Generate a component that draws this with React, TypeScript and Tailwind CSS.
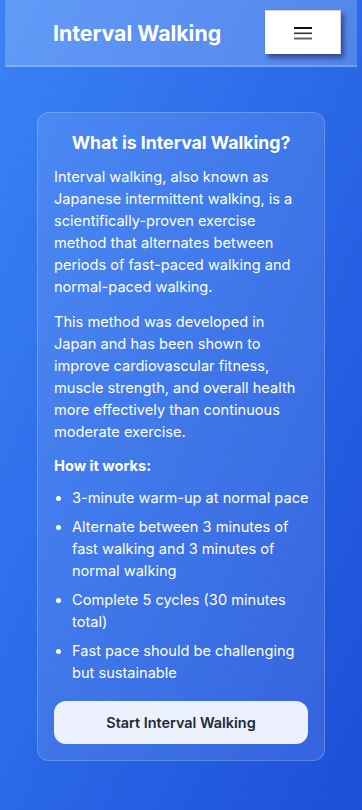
import React from "react";

export default function App() {
  return (
    <div
      className="min-h-screen w-full bg-gradient-to-br from-[#3b82f6] to-[#1d4ed8] text-white"
      style={{ fontFamily: "Inter, 'Noto Sans', sans-serif" }}
    >
      <header className="mx-[5px] h-[67px] flex items-center justify-between pl-12 pr-4 bg-white/20 border-b-2 border-white/20">
        <h1 className="text-[21.3px] font-bold leading-7">Interval Walking</h1>
        <button className="w-[76px] h-[44px] bg-white flex items-center justify-center shadow-[3px_4px_5px_rgba(0,0,30,0.45)] border-r border-t border-gray-300 mb-px">
          <svg width="18" height="14" viewBox="0 0 18 14" aria-hidden>
            <rect x="0" y="1" width="18" height="2" fill="#111" />
            <rect x="0" y="6.5" width="18" height="1.6" fill="#333" />
            <rect x="0" y="11.5" width="18" height="2" fill="#666" />
          </svg>
        </button>
      </header>

      <main className="flex justify-center pt-[45px] pb-12">
        <section className="w-[288px] rounded-xl border border-white/20 bg-white/10 p-4 pb-4">
          <h2 className="text-center text-[17.7px] font-bold leading-7 mb-[9px]">
            What is Interval Walking?
          </h2>
          <p className="text-[14.6px] leading-[22px] mb-[13px]">
            Interval walking, also known as Japanese intermittent walking, is a
            scientifically-proven exercise method that alternates between periods
            of fast-paced walking and normal-paced walking.
          </p>
          <p className="text-[14.6px] leading-[22px] mb-[12px]">
            This method was developed in Japan and has been shown to improve
            cardiovascular fitness, muscle strength, and overall health more
            effectively than continuous moderate exercise.
          </p>
          <h3 className="text-[14.6px] font-bold leading-[22px] mb-[10px]">How it works:</h3>
          <ul className="list-disc pl-[18px] -mr-1.5 text-[14.6px] leading-[22px] flex flex-col gap-[7px]">
            <li>3-minute warm-up at normal pace</li>
            <li>Alternate between 3 minutes of fast walking and 3 minutes of normal walking</li>
            <li>Complete 5 cycles (30 minutes total)</li>
            <li>Fast pace should be challenging but sustainable</li>
          </ul>
          <button className="mt-[17px] w-full h-[43px] rounded-xl bg-white/90 text-[#1f2937] text-[14.4px] font-semibold">
            Start Interval Walking
          </button>
        </section>
      </main>
    </div>
  );
}
